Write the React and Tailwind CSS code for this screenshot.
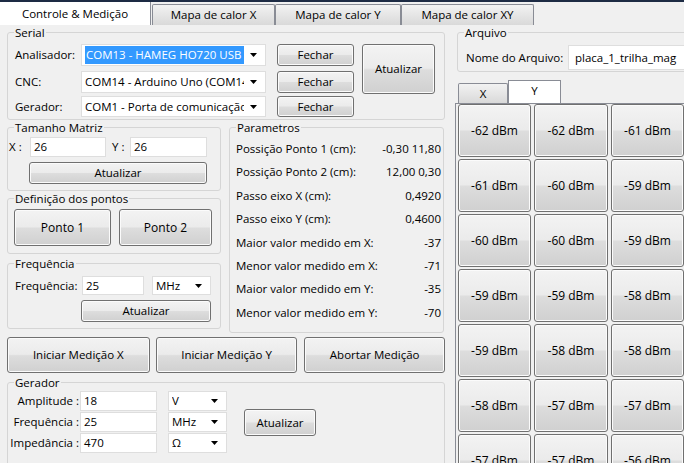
import React from "react";

const btn =
  "flex items-center justify-center border border-[#707070] rounded-[3px] bg-[linear-gradient(#f3f3f3_0%,#ebebeb_48%,#dddddd_52%,#d0d0d0_100%)] shadow-[inset_0_0_0_1px_#fbfbfb] text-black";
const box = "bg-white border border-[#dedede] flex items-center pl-[3px]";
const tabOff =
  "flex items-center justify-center border border-b-0 border-[#898c95] rounded-t-[2px] bg-[linear-gradient(#f2f2f2,#d9d9d9)]";

function Arrow() {
  return (
    <svg width="7" height="4" viewBox="0 0 7 4" className="shrink-0">
      <path d="M0 0h7L3.5 4z" fill="#000" />
    </svg>
  );
}

function Combo({ value, className, selected }) {
  return (
    <div className={`${box} pr-[8px] ${className}`}>
      <div className="flex-1 overflow-hidden whitespace-nowrap mr-[6px]">
        {selected ? (
          <span className="block bg-[#3399ff] text-white leading-[18px] pl-[1px]">{value}</span>
        ) : (
          value
        )}
      </div>
      <Arrow />
    </div>
  );
}

function Group({ title, className, children }) {
  return (
    <fieldset className={`border border-[#d5d5d5] rounded-[3px] ${className}`}>
      <legend className="ml-[6px] px-[1px] leading-[13px]">{title}</legend>
      {children}
    </fieldset>
  );
}

const params = [
  ["Possição Ponto 1 (cm):", "-0,30 11,80"],
  ["Possição Ponto 2 (cm):", "12,00 0,30"],
  ["Passo eixo X (cm):", "0,4920"],
  ["Passo eixo Y (cm):", "0,4600"],
  ["Maior valor medido em X:", "-37"],
  ["Menor valor medido em X:", "-71"],
  ["Maior valor medido em Y:", "-35"],
  ["Menor valor medido em Y:", "-70"],
];

const cells = [
  -62, -62, -61, -61, -60, -59, -60, -60, -59, -59, -59, -58, -59, -58, -58, -58, -57, -57,
  -57, -57, -56,
];

const gerador = [
  ["Amplitude :", "18", "V"],
  ["Frequência :", "25", "MHz"],
  ["Impedância :", "470", "Ω"],
];

export default function App() {
  return (
    <div className="w-[684px] h-[463px] overflow-hidden bg-[#f0f0f0] font-['Open_Sans',sans-serif] text-[11.5px] text-black flex flex-col">
      <div className="h-[2px] bg-[#1d2b44] shrink-0" />
      {/* Main tabs */}
      <div className="h-[23px] flex items-end shrink-0">
        <div className="w-[151px] h-[23px] bg-white border-r border-[#898c95] flex items-center justify-center">
          Controle &amp; Medição
        </div>
        <div className={`${tabOff} w-[123px] h-[21px] ml-[1px]`}>Mapa de calor X</div>
        <div className={`${tabOff} w-[126px] h-[21px]`}>Mapa de calor Y</div>
        <div className={`${tabOff} w-[133px] h-[21px]`}>Mapa de calor XY</div>
      </div>

      <div className="flex items-start">
        {/* Left column */}
        <div className="ml-[7px] w-[438px] shrink-0 flex flex-col">
          <Group title="Serial" className="mt-[1px] h-[94px]">
            <div className="flex mt-[5px] pl-[7px]">
              <div className="flex flex-col">
                {[
                  ["Analisador:", "COM13 - HAMEG HO720 USB Serial Port", true, "h-[22px]"],
                  ["CNC:", "COM14 - Arduino Uno (COM14)", false, "h-[22px] mt-[5px]"],
                  ["Gerador:", "COM1 - Porta de comunicação (COM1)", false, "h-[21px] mt-[3px]"],
                ].map(([label, val, sel, h]) => (
                  <div key={label} className={`flex items-center ${h}`}>
                    <div className="w-[66px]">{label}</div>
                    <Combo value={val} selected={sel} className="w-[185px] h-full" />
                    <div className={`${btn} w-[77px] h-full ml-[11px]`}>Fechar</div>
                  </div>
                ))}
              </div>
              <div className={`${btn} w-[73px] h-[50px] ml-[8px]`}>Atualizar</div>
            </div>
          </Group>

          <div className="flex mt-[1px]">
            <div className="w-[214px] flex flex-col">
              <Group title="Tamanho Matriz" className="h-[70px]">
                <div className="flex items-center mt-[3px] h-[20px]">
                  <div className="w-[22px] pl-[1px]">X :</div>
                  <div className={`${box} w-[76px] h-full`}>26</div>
                  <div className="w-[24px] pl-[6px]">Y :</div>
                  <div className={`${box} w-[77px] h-full`}>26</div>
                </div>
                <div className={`${btn} ml-[21px] mt-[5px] w-[178px] h-[22px]`}>Atualizar</div>
              </Group>
              <Group title="Definição dos pontos" className="h-[62px] mt-[1px]">
                <div className="flex mt-[4px] pl-[6px]">
                  <div className={`${btn} w-[97px] h-[37px] text-[12px]`}>Ponto 1</div>
                  <div className={`${btn} w-[93px] h-[37px] ml-[8px] text-[12px]`}>Ponto 2</div>
                </div>
              </Group>
              <Group title="Frequência" className="h-[72px] mt-[3px]">
                <div className="flex items-center mt-[6px] h-[19px] pl-[7px]">
                  <div className="w-[67px]">Frequência:</div>
                  <div className={`${box} w-[62px] h-full`}>25</div>
                  <Combo value="MHz" className="w-[59px] h-full ml-[8px]" />
                </div>
                <div className={`${btn} ml-[73px] mt-[5px] w-[130px] h-[22px]`}>Atualizar</div>
              </Group>
            </div>

            <Group title="Parametros" className="w-[215px] h-[212px] ml-[8px]">
              <div className="flex flex-col mt-[3px] pl-[6px] pr-[2px]">
                {params.map(([k, v]) => (
                  <div key={k} className="flex justify-between items-center h-[23.4px]">
                    <span>{k}</span>
                    <span>{v}</span>
                  </div>
                ))}
              </div>
            </Group>
          </div>

          <div className="flex mt-[4px] gap-[6px]">
            <div className={`${btn} w-[143px] h-[36px]`}>Iniciar Medição X</div>
            <div className={`${btn} w-[142px] h-[36px]`}>Iniciar Medição Y</div>
            <div className={`${btn} w-[141px] h-[36px] ml-[1px]`}>Abortar Medição</div>
          </div>

          <Group title="Gerador" className="mt-[3px] h-[100px]">
            <div className="flex items-center mt-[2px]">
              <div className="flex flex-col">
                {gerador.map(([label, val, unit]) => (
                  <div key={label} className="flex items-center h-[20px] mb-[1px]">
                    <div className="w-[72px] text-right pr-[1px] whitespace-nowrap">{label}</div>
                    <div className={`${box} w-[77px] h-full`}>{val}</div>
                    <Combo value={unit} className="w-[59px] h-full ml-[11px]" />
                  </div>
                ))}
              </div>
              <div className={`${btn} w-[72px] h-[27px] ml-[17px]`}>Atualizar</div>
            </div>
          </Group>
        </div>

        {/* Right column */}
        <div className="ml-[10px] w-[229px] shrink-0 flex flex-col">
          <Group title="Arquivo" className="ml-[2px] mt-[1px] w-[240px] h-[46px] rounded-r-none">
            <div className="flex items-center mt-[6px] h-[25px] pl-[8px]">
              <div className="w-[102px]">Nome do Arquivo:</div>
              <div className={`${box} w-[130px] h-full pl-[6px]`}>placa_1_trilha_mag</div>
            </div>
          </Group>
          <div className="flex items-end h-[23px] mt-[8px] pl-[3px]">
            <div className={`${tabOff} w-[50px] h-[20px]`}>X</div>
            <div className="w-[53px] h-[23px] bg-white border border-b-0 border-[#898c95] flex items-center justify-center pb-[3px]">
              Y
            </div>
          </div>
          <div className="border-t border-l border-[#898c95] pl-[2px]">
            <div className="grid grid-cols-[73px_74px_73px] gap-x-[3px] gap-y-[2px]">
              {cells.map((c, i) => (
                <div key={i} className={`${btn} h-[53px] text-[12px]`}>
                  {c} dBm
                </div>
              ))}
            </div>
          </div>
        </div>
      </div>
    </div>
  );
}
